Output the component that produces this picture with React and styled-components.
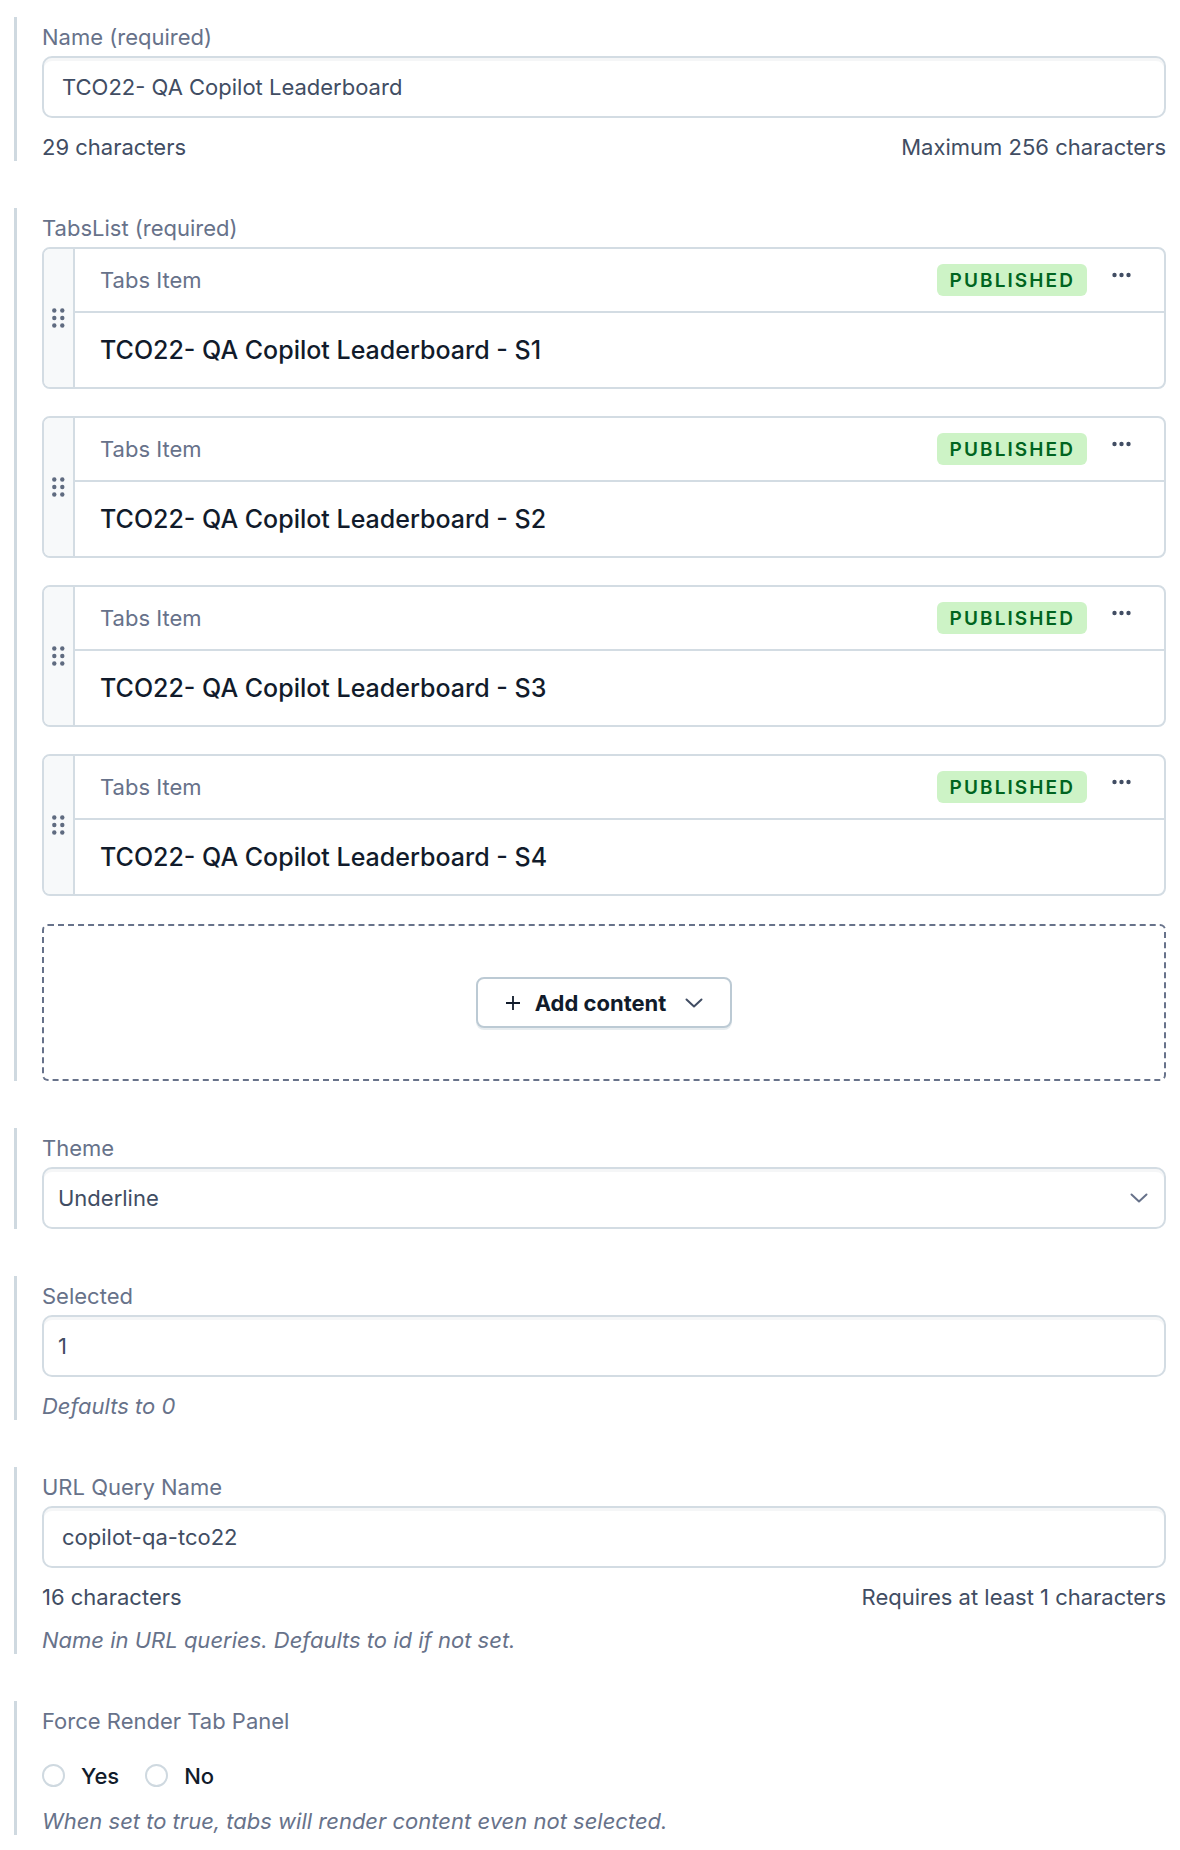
import React from 'react'
import styled, { createGlobalStyle } from 'styled-components'

const GlobalStyle = createGlobalStyle`
    body {
        margin: 0;
        background: #ffffff;
        font-family: Inter, "Noto Sans", "Liberation Sans", sans-serif;
    }
`

const Page = styled.div`
    padding: 17px 14px 15px 14px;
    display: flex;
    flex-direction: column;
    gap: 47px;
`
const Field = styled.section`
    border-left: 3px solid #cfd9e0;
    padding: 4px 0 0 25px;
    display: flex;
    flex-direction: column;
`
const Label = styled.div`
    font-size: 22px;
    line-height: 33px;
    color: #67728a;
    margin-bottom: 2px;
`
const InputBox = styled.div`
    box-sizing: border-box;
    height: 62px;
    display: flex;
    align-items: center;
    justify-content: space-between;
    padding: 0 ${p => p.$right || 18}px 0 ${p => p.$left || 18}px;
    border: 2px solid #d3dce3;
    border-radius: 10px;
    box-shadow: inset 0 3px 0 rgba(225, 228, 232, 0.35);
    font-size: 22px;
    color: #414d63;
    background: #ffffff;
`
const HelpRow = styled.div`
    margin-top: 15px;
    display: flex;
    justify-content: space-between;
    font-size: 22px;
    line-height: 28px;
    color: #414d63;
`
const Hint = styled.div`
    margin-top: 15px;
    font-size: 22px;
    line-height: 28px;
    font-style: italic;
    color: #67728a;
`
const CardList = styled.div`
    display: flex;
    flex-direction: column;
    gap: 27px;
`
const Card = styled.div`
    box-sizing: border-box;
    height: 142px;
    display: flex;
    border: 2px solid #d3dce3;
    border-radius: 8px;
    overflow: hidden;
`
const DragColumn = styled.div`
    width: 29px;
    flex-shrink: 0;
    background: #f7f9fa;
    border-right: 2px solid #d3dce3;
    display: flex;
    align-items: center;
    justify-content: center;
`
const CardBody = styled.div`
    flex: 1;
    display: flex;
    flex-direction: column;
`
const CardHeader = styled.div`
    height: 62px;
    display: flex;
    align-items: center;
    padding: 0 33px 0 25px;
    border-bottom: 2px solid #d3dce3;
`
const CardType = styled.div`
    flex: 1;
    font-size: 22px;
    color: #67728a;
`
const Badge = styled.span`
    height: 32px;
    display: inline-flex;
    align-items: center;
    padding: 0 12px 0 13px;
    border-radius: 6px;
    background: #cdf3c6;
    color: #006420;
    font-size: 19px;
    font-weight: 600;
    letter-spacing: 2.1px;
    margin-right: 25px;
`
const MoreButton = styled.span`
    display: flex;
    height: 32px;
`
const CardTitle = styled.div`
    flex: 1;
    display: flex;
    align-items: center;
    padding-left: 25px;
    font-size: 25px;
    font-weight: 500;
    color: #111b2b;
`
const DropZone = styled.div`
    box-sizing: border-box;
    height: 157px;
    margin-top: 28px;
    border: 2px dashed #67728a;
    border-radius: 6px;
    display: flex;
    align-items: center;
    justify-content: center;
`
const AddButton = styled.button`
    box-sizing: border-box;
    height: 51px;
    display: flex;
    align-items: center;
    padding: 0 27px;
    border: 2px solid #bccad4;
    border-radius: 8px;
    background: #ffffff;
    box-shadow: 0 2px 0 rgba(207, 217, 224, 0.5);
    font-family: inherit;
    font-size: 22px;
    font-weight: 700;
    color: #111b2b;
    gap: 14px;
`
const Chevron = styled.span`
    display: flex;
    margin-left: ${p => p.$gap || 0}px;
`
const RadioRow = styled.div`
    margin-top: 19px;
    height: 33px;
    display: flex;
    align-items: center;
`
const RadioOption = styled.label`
    display: flex;
    align-items: center;
    gap: 16px;
    margin-right: 26px;
    font-size: 22px;
    font-weight: 500;
    color: #111b2b;
`
const RadioCircle = styled.span`
    box-sizing: border-box;
    width: 23px;
    height: 23px;
    border-radius: 50%;
    border: 2px solid #cfd9e0;
    background: #ffffff;
`

const DragIcon = () => (
    <svg width="13" height="20" viewBox="0 0 13 20">
        {[2.5, 10, 17.5].map(y => [2.3, 10.3].map(x => (
            <circle key={x + '-' + y} cx={x} cy={y} r="2.2" fill="#5f6b80" />
        )))}
    </svg>
)

const DotsIcon = () => (
    <svg width="19" height="32" viewBox="0 0 19 32">
        <circle cx="2.5" cy="11" r="2.2" fill="#414d63" />
        <circle cx="9.5" cy="11" r="2.2" fill="#414d63" />
        <circle cx="16.5" cy="11" r="2.2" fill="#414d63" />
    </svg>
)

const PlusIcon = () => (
    <svg width="16" height="16" viewBox="0 0 16 16">
        <path d="M8 1v14M1 8h14" stroke="#111b2b" strokeWidth="1.8" fill="none" />
    </svg>
)

const ChevronIcon = ({ color }) => (
    <svg width="18" height="10" viewBox="0 0 18 10">
        <path d="M1.5 1.5L9 8.5l7.5-7" stroke={color} strokeWidth="2" fill="none" strokeLinecap="round" strokeLinejoin="round" />
    </svg>
)

const tabs = ['S1', 'S2', 'S3', 'S4']

const App = () => {
  return (
        <Page>
            <GlobalStyle />
            <Field>
                <Label>Name (required)</Label>
                <InputBox>TCO22- QA Copilot Leaderboard</InputBox>
                <HelpRow>
                    <span>29 characters</span>
                    <span>Maximum 256 characters</span>
                </HelpRow>
            </Field>

            <Field>
                <Label>TabsList (required)</Label>
                <CardList>
                    {tabs.map(t => (
                        <Card key={t}>
                            <DragColumn><DragIcon /></DragColumn>
                            <CardBody>
                                <CardHeader>
                                    <CardType>Tabs Item</CardType>
                                    <Badge>PUBLISHED</Badge>
                                    <MoreButton><DotsIcon /></MoreButton>
                                </CardHeader>
                                <CardTitle>TCO22- QA Copilot Leaderboard - {t}</CardTitle>
                            </CardBody>
                        </Card>
                    ))}
                </CardList>
                <DropZone>
                    <AddButton>
                        <PlusIcon />
                        Add content
                        <Chevron $gap={5}><ChevronIcon color="#414d63" /></Chevron>
                    </AddButton>
                </DropZone>
            </Field>

            <Field>
                <Label>Theme</Label>
                <InputBox $left={14} $right={16}>
                    Underline
                    <Chevron><ChevronIcon color="#67728a" /></Chevron>
                </InputBox>
            </Field>

            <Field>
                <Label>Selected</Label>
                <InputBox $left={14}>1</InputBox>
                <Hint>Defaults to 0</Hint>
            </Field>

            <Field>
                <Label>URL Query Name</Label>
                <InputBox>copilot-qa-tco22</InputBox>
                <HelpRow>
                    <span>16 characters</span>
                    <span>Requires at least 1 characters</span>
                </HelpRow>
                <Hint>Name in URL queries. Defaults to id if not set.</Hint>
            </Field>

            <Field>
                <Label>Force Render Tab Panel</Label>
                <RadioRow>
                    <RadioOption><RadioCircle />Yes</RadioOption>
                    <RadioOption><RadioCircle />No</RadioOption>
                </RadioRow>
                <Hint>When set to true, tabs will render content even not selected.</Hint>
            </Field>
        </Page>
  )
}

export default App
